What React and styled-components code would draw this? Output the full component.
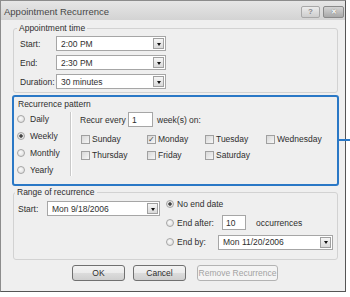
import React from 'react';
import styled, { createGlobalStyle } from 'styled-components';

const GlobalStyle = createGlobalStyle`
  html, body {
    margin: 0;
    padding: 0;
    background: #fff;
  }
  body {
    font-family: "Liberation Sans", Arial, sans-serif;
    font-size: 8.5px;
    color: #2e2e2e;
  }
`;

const days = [
  { name: 'Sunday' },
  { name: 'Monday', checked: true },
  { name: 'Tuesday' },
  { name: 'Wednesday' },
  { name: 'Thursday' },
  { name: 'Friday' },
  { name: 'Saturday' },
];

const patterns = [
  { name: 'Daily' },
  { name: 'Weekly', checked: true },
  { name: 'Monthly' },
  { name: 'Yearly' },
];

const Select = ({ value, width }) => (
  <SelectBox $width={width}>
    <SelectText>{value}</SelectText>
    <ArrowButton />
  </SelectBox>
);

const App = () => {
  return (
    <Stage>
      <GlobalStyle />
      <Dialog>
        <TitleBar>
          <TitleText>Appointment Recurrence</TitleText>
          <CaptionButtons>
            <CaptionBtn>?</CaptionBtn>
            <CaptionBtn $close>✕</CaptionBtn>
          </CaptionButtons>
        </TitleBar>
        <Body>
          <GroupBox>
            <Legend>Appointment time</Legend>
            <FieldStack>
              <FieldRow>
                <FieldLabel>Start:</FieldLabel>
                <Select value="2:00 PM" width={110} />
              </FieldRow>
              <FieldRow>
                <FieldLabel>End:</FieldLabel>
                <Select value="2:30 PM" width={110} />
              </FieldRow>
              <FieldRow>
                <FieldLabel>Duration:</FieldLabel>
                <Select value="30 minutes" width={110} />
              </FieldRow>
            </FieldStack>
          </GroupBox>

          <Highlight>
            <PaneTitle>Recurrence pattern</PaneTitle>
            <PatternLayout>
              <RadioColumn>
                {patterns.map(p => (
                  <RadioRow key={p.name}>
                    <Radio $checked={p.checked} />
                    <span>{p.name}</span>
                  </RadioRow>
                ))}
              </RadioColumn>
              <Divider />
              <RightPane>
                <RecurRow>
                  <RecurLabel>Recur every</RecurLabel>
                  <TextInput $width={25}>1</TextInput>
                  <AfterText $gap={4}>week(s) on:</AfterText>
                </RecurRow>
                <DayGrid>
                  {days.map(d => (
                    <DayItem key={d.name}>
                      <CheckBox $checked={d.checked}>{d.checked ? '✓' : ''}</CheckBox>
                      <span>{d.name}</span>
                    </DayItem>
                  ))}
                </DayGrid>
              </RightPane>
            </PatternLayout>
          </Highlight>

          <GroupBox $tight>
            <Legend>Range of recurrence</Legend>
            <RangeLayout>
              <StartRow>
                <FieldLabel $width={29}>Start:</FieldLabel>
                <Select value="Mon 9/18/2006" width={113} />
              </StartRow>
              <EndColumn>
                <EndRow $height={12}>
                  <Radio $checked />
                  <span>No end date</span>
                </EndRow>
                <EndRow $height={15} $top={5}>
                  <Radio />
                  <EndLabel $width={45}>End after:</EndLabel>
                  <TextInput $width={24}>10</TextInput>
                  <AfterText $gap={7}>occurrences</AfterText>
                </EndRow>
                <EndRow $height={16} $top={4}>
                  <Radio />
                  <EndLabel $width={41}>End by:</EndLabel>
                  <Select value="Mon 11/20/2006" width={115} />
                </EndRow>
              </EndColumn>
            </RangeLayout>
          </GroupBox>

          <ButtonRow>
            <PushButton>OK</PushButton>
            <PushButton>Cancel</PushButton>
            <PushButton $wide disabled>
              Remove Recurrence
            </PushButton>
          </ButtonRow>
        </Body>
      </Dialog>
      <CalloutLine />
    </Stage>
  );
};

export default App;

const Stage = styled.div`
  position: relative;
  width: 350px;
  height: 297px;
  background: #fff;
  overflow: hidden;
`;

const Dialog = styled.div`
  box-sizing: border-box;
  width: 346px;
  height: 292px;
  background: #efefef;
  border: 1px solid #8c8c8c;
  border-right-color: #555;
  border-bottom-color: #555;
  display: flex;
  flex-direction: column;
`;

const TitleBar = styled.div`
  height: 19px;
  display: flex;
  align-items: center;
  padding: 1px 1px 0 3px;
  box-sizing: border-box;
  background: linear-gradient(#e6e6e6, #d3d3d3);
`;

const TitleText = styled.div`
  flex: 1;
  font-size: 9.5px;
  color: #474747;
`;

const CaptionButtons = styled.div`
  display: flex;
  gap: 3px;
  align-self: flex-start;
  margin-top: 4px;
`;

const CaptionBtn = styled.div`
  box-sizing: border-box;
  width: ${p => (p.$close ? 21 : 19)}px;
  height: 12px;
  border: 1px solid ${p => (p.$close ? '#8a8a8a' : '#a8a8a8')};
  border-radius: 2px;
  background: ${p =>
    p.$close
      ? 'linear-gradient(#d4d4d4, #a9a9a9)'
      : 'linear-gradient(#ececec, #cdcdcd)'};
  color: ${p => (p.$close ? '#fff' : '#8a8a8a')};
  font-size: ${p => (p.$close ? 7 : 8)}px;
  font-weight: bold;
  line-height: 10px;
  text-align: center;
  text-shadow: ${p => (p.$close ? '0 0 1px #555' : 'none')};
`;

const Body = styled.div`
  flex: 1;
  padding: 2px 6px 8px 11px;
  display: flex;
  flex-direction: column;
`;

const GroupBox = styled.fieldset`
  margin: 0 1px;
  padding: ${p => (p.$tight ? '0 6px 9px 4px' : '2px 6px 3px 6px')};
  border: 1px solid #d2d2d2;
  border-radius: 3px;
  min-inline-size: 0;
`;

const Legend = styled.legend`
  padding: 0 2px;
  margin-left: -3px;
  line-height: 12px;
  font-size: 8.5px;
`;

const FieldStack = styled.div`
  display: flex;
  flex-direction: column;
  gap: 4px;
`;

const FieldRow = styled.div`
  display: flex;
  align-items: center;
  height: 15px;
`;

const FieldLabel = styled.div`
  width: ${p => p.$width || 36}px;
  flex-shrink: 0;
`;

const SelectBox = styled.div`
  box-sizing: border-box;
  width: ${p => p.$width}px;
  height: 15px;
  display: flex;
  align-items: center;
  padding-left: 4px;
  background: #fff;
  border: 1px solid #a6a6a6;
`;

const SelectText = styled.div`
  flex: 1;
  white-space: nowrap;
`;

const ArrowButton = styled.div`
  box-sizing: border-box;
  width: 11px;
  height: 11px;
  margin-right: 1px;
  border: 1px solid #a0a0a0;
  background: linear-gradient(#f6f6f6, #d9d9d9);
  display: flex;
  align-items: center;
  justify-content: center;
  &::after {
    content: '';
    border-left: 2.5px solid transparent;
    border-right: 2.5px solid transparent;
    border-top: 3px solid #111;
    margin-top: 1px;
  }
`;

const Highlight = styled.div`
  margin-top: 2px;
  border: 2px solid #2a78c6;
  border-radius: 3px;
  padding: 1px 0 6px 3px;
  display: flex;
  flex-direction: column;
`;

const PaneTitle = styled.div`
  line-height: 12px;
  margin-left: 1px;
`;

const PatternLayout = styled.div`
  display: flex;
`;

const RadioColumn = styled.div`
  width: 50px;
  display: flex;
  flex-direction: column;
`;

const RadioRow = styled.div`
  height: 17px;
  display: flex;
  align-items: center;
  gap: 5px;
`;

const Radio = styled.span`
  box-sizing: border-box;
  width: 8px;
  height: 8px;
  flex-shrink: 0;
  border-radius: 50%;
  border: 1px solid #a5a5a5;
  background: ${p =>
    p.$checked
      ? 'radial-gradient(circle, #444 0 1.4px, #e4e4e4 2px)'
      : 'radial-gradient(circle at 40% 40%, #fafafa, #d8d8d8)'};
`;

const Divider = styled.div`
  width: 1px;
  margin: 2px 9px 2px 3px;
  background: #c9c9c9;
  box-shadow: 1px 0 0 #fff;
`;

const RightPane = styled.div`
  display: flex;
  flex-direction: column;
  padding-top: 2px;
`;

const RecurRow = styled.div`
  display: flex;
  align-items: center;
  height: 15px;
`;

const RecurLabel = styled.div`
  width: 48px;
`;

const TextInput = styled.div`
  box-sizing: border-box;
  width: ${p => p.$width}px;
  height: 15px;
  padding-left: 3px;
  display: flex;
  align-items: center;
  background: #fff;
  border: 1px solid #a6a6a6;
`;

const AfterText = styled.div`
  margin-left: ${p => p.$gap}px;
`;

const DayGrid = styled.div`
  margin: 4px 0 0 1px;
  display: grid;
  grid-template-columns: 66px 58px 61px auto;
  grid-auto-rows: 16px;
`;

const DayItem = styled.div`
  display: flex;
  align-items: center;
  gap: 2px;
`;

const CheckBox = styled.span`
  box-sizing: border-box;
  width: 9px;
  height: 9px;
  border: 1px solid #a0a0a0;
  background: linear-gradient(135deg, #d8d8d8, #f6f6f6);
  font-size: 8px;
  line-height: 7px;
  text-align: center;
  color: #444;
`;

const RangeLayout = styled.div`
  display: flex;
  align-items: flex-start;
`;

const StartRow = styled.div`
  display: flex;
  align-items: center;
  margin-top: 3px;
`;

const EndColumn = styled.div`
  margin-left: 6px;
  display: flex;
  flex-direction: column;
`;

const EndRow = styled.div`
  display: flex;
  align-items: center;
  gap: 3px;
  height: ${p => p.$height}px;
  margin-top: ${p => p.$top || 0}px;
`;

const EndLabel = styled.span`
  width: ${p => p.$width - 3}px;
`;

const ButtonRow = styled.div`
  margin: 5px 0 0 60px;
  display: flex;
  gap: 8px;
`;

const PushButton = styled.button`
  box-sizing: border-box;
  width: ${p => (p.$wide ? 81 : 53)}px;
  height: 16px;
  margin-left: ${p => (p.$wide ? 3 : 0)}px;
  padding: 0;
  font-family: inherit;
  font-size: 8.5px;
  color: #2e2e2e;
  border: 1px solid #707070;
  border-radius: 3px;
  background: linear-gradient(#f3f3f3 0%, #ebebeb 50%, #dcdcdc 51%, #cfcfcf 100%);
  &:disabled {
    color: #a3a3a3;
    border-color: #b3b3b3;
    background: #f4f4f4;
  }
`;

const CalloutLine = styled.div`
  position: absolute;
  top: 139px;
  left: 339px;
  width: 11px;
  height: 2px;
  background: #2a78c6;
`;
